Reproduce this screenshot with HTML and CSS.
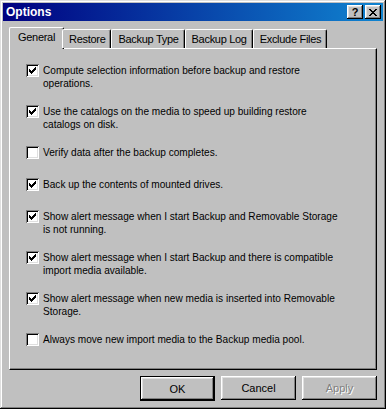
FILE: index.html
```html
<!DOCTYPE html>
<html lang="en">
<head>
    <meta charset="UTF-8">
    <title>Options</title>
    <link rel="stylesheet" href="styles.css">
</head>
<body>
    <div class="window">
        <div class="titlebar">
            <span class="title">Options</span>
            <div class="title-btns">
                <div class="tbtn help">?</div>
                <div class="tbtn">
                    <svg width="8" height="7" viewBox="0 0 8 7" shape-rendering="crispEdges">
                        <path d="M0 0h2v1h-2zM6 0h2v1h-2zM1 1h2v1h-2zM5 1h2v1h-2zM2 2h4v1h-4zM3 3h2v1h-2zM2 4h4v1h-4zM1 5h2v1h-2zM5 5h2v1h-2zM0 6h2v1h-2zM6 6h2v1h-2z" fill="#000"/>
                    </svg>
                </div>
            </div>
        </div>

        <div class="content">
            <div class="tabs">
                <div class="tab active">General</div>
                <div class="tab">Restore</div>
                <div class="tab">Backup Type</div>
                <div class="tab">Backup Log</div>
                <div class="tab">Exclude Files</div>
            </div>

            <div class="panel">
                <div class="opt">
                    <span class="box checked"><svg viewBox="0 0 7 7"><path d="M0 2h1v3h-1zM1 3h1v3h-1zM2 4h1v3h-1zM3 3h1v3h-1zM4 2h1v3h-1zM5 1h1v3h-1zM6 0h1v3h-1z"/></svg></span>
                    <span class="label">Compute selection information before backup and restore<br>operations.</span>
                </div>
                <div class="opt">
                    <span class="box checked"><svg viewBox="0 0 7 7"><path d="M0 2h1v3h-1zM1 3h1v3h-1zM2 4h1v3h-1zM3 3h1v3h-1zM4 2h1v3h-1zM5 1h1v3h-1zM6 0h1v3h-1z"/></svg></span>
                    <span class="label">Use the catalogs on the media to speed up building restore<br>catalogs on disk.</span>
                </div>
                <div class="opt single">
                    <span class="box"></span>
                    <span class="label">Verify data after the backup completes.</span>
                </div>
                <div class="opt single">
                    <span class="box checked"><svg viewBox="0 0 7 7"><path d="M0 2h1v3h-1zM1 3h1v3h-1zM2 4h1v3h-1zM3 3h1v3h-1zM4 2h1v3h-1zM5 1h1v3h-1zM6 0h1v3h-1z"/></svg></span>
                    <span class="label">Back up the contents of mounted drives.</span>
                </div>
                <div class="opt">
                    <span class="box checked"><svg viewBox="0 0 7 7"><path d="M0 2h1v3h-1zM1 3h1v3h-1zM2 4h1v3h-1zM3 3h1v3h-1zM4 2h1v3h-1zM5 1h1v3h-1zM6 0h1v3h-1z"/></svg></span>
                    <span class="label">Show alert message when I start Backup and Removable Storage<br>is not running.</span>
                </div>
                <div class="opt">
                    <span class="box checked"><svg viewBox="0 0 7 7"><path d="M0 2h1v3h-1zM1 3h1v3h-1zM2 4h1v3h-1zM3 3h1v3h-1zM4 2h1v3h-1zM5 1h1v3h-1zM6 0h1v3h-1z"/></svg></span>
                    <span class="label">Show alert message when I start Backup and there is compatible<br>import media available.</span>
                </div>
                <div class="opt">
                    <span class="box checked"><svg viewBox="0 0 7 7"><path d="M0 2h1v3h-1zM1 3h1v3h-1zM2 4h1v3h-1zM3 3h1v3h-1zM4 2h1v3h-1zM5 1h1v3h-1zM6 0h1v3h-1z"/></svg></span>
                    <span class="label">Show alert message when new media is inserted into Removable<br>Storage.</span>
                </div>
                <div class="opt single">
                    <span class="box"></span>
                    <span class="label">Always move new import media to the Backup media pool.</span>
                </div>
            </div>

            <div class="actions">
                <div class="btn default"><span>OK</span></div>
                <div class="btn">Cancel</div>
                <div class="btn disabled">Apply</div>
            </div>
        </div>
    </div>
</body>
</html>
```

FILE: styles.css
```css
body {
    margin: 0;
    background: #c0c0c0;
    font-family: "Liberation Sans", Arial, sans-serif;
    font-size: 10px;
    color: #000;
}
.window {
    width: 386px;
    height: 409px;
    box-sizing: border-box;
    padding: 3px;
    background: #c0c0c0;
    box-shadow: inset -1px -1px #000, inset 1px 1px #dfdfdf, inset -2px -2px #808080, inset 2px 2px #fff;
}
.titlebar {
    height: 18px;
    display: flex;
    align-items: center;
    justify-content: space-between;
    padding: 0 2px 0 3px;
    background: linear-gradient(to right, #000080, #1084d0);
}
.title {
    color: #fff;
    font-weight: bold;
    font-size: 12px;
}
.title-btns {
    display: flex;
    gap: 2px;
}
.tbtn {
    width: 16px;
    height: 14px;
    box-sizing: border-box;
    display: flex;
    align-items: center;
    justify-content: center;
    background: #c0c0c0;
    box-shadow: inset -1px -1px #000, inset 1px 1px #fff, inset -2px -2px #808080, inset 2px 2px #dfdfdf;
}
.tbtn.help {
    font-weight: bold;
    font-size: 11px;
    line-height: 14px;
}
.content {
    padding: 6px 6px 0;
}
.tabs {
    display: flex;
    align-items: flex-end;
    height: 21px;
    padding-left: 2px;
    position: relative;
    z-index: 1;
}
.tab {
    height: 19px;
    box-sizing: border-box;
    padding: 2px 5px 0 6px;
    line-height: 15px;
    font-size: 11px;
    letter-spacing: -0.3px;
    border-top: 1px solid #fff;
    border-left: 1px solid #fff;
    border-right: 1px solid #000;
    border-radius: 2px 2px 0 0;
    box-shadow: inset -1px 0 #808080;
    background: #c0c0c0;
}
.tab.active {
    height: 22px;
    margin: 0 -2px -1px;
    padding-left: 8px;
    padding-right: 8px;
    padding-top: 2px;
}
.panel {
    height: 322px;
    box-sizing: border-box;
    padding: 15px 10px 0 16px;
    border-top: 1px solid #fff;
    border-left: 1px solid #fff;
    border-right: 1px solid #000;
    border-bottom: 1px solid #000;
    box-shadow: inset -1px -1px #808080;
}
.opt {
    display: flex;
    align-items: flex-start;
    gap: 4px;
    line-height: 13px;
    margin-bottom: 15px;
}
.opt.single {
    margin-bottom: 19px;
}
.box {
    width: 13px;
    height: 13px;
    flex: none;
    box-sizing: border-box;
    background: #fff;
    display: flex;
    align-items: center;
    justify-content: center;
    box-shadow: inset 1px 1px #808080, inset -1px -1px #fff, inset 2px 2px #000, inset -2px -2px #dfdfdf;
}
.box svg {
    width: 7px;
    height: 7px;
    shape-rendering: crispEdges;
}
.label {
    white-space: nowrap;
    font-size: 10.1px;
}
.actions {
    display: flex;
    justify-content: flex-end;
    gap: 6px;
    margin-top: 6px;
}
.btn {
    width: 75px;
    height: 24px;
    box-sizing: border-box;
    display: flex;
    align-items: center;
    justify-content: center;
    font-size: 11px;
    background: #c0c0c0;
    box-shadow: inset -1px -1px #000, inset 1px 1px #fff, inset -2px -2px #808080, inset 2px 2px #dfdfdf;
}
.btn.default {
    height: 25px;
    box-shadow: inset 0 0 0 1px #000, inset -2px -2px #000, inset 2px 2px #fff, inset -3px -3px #808080, inset 3px 3px #dfdfdf;
}
.btn.disabled {
    color: #808080;
    text-shadow: 1px 1px #fff;
}
```
